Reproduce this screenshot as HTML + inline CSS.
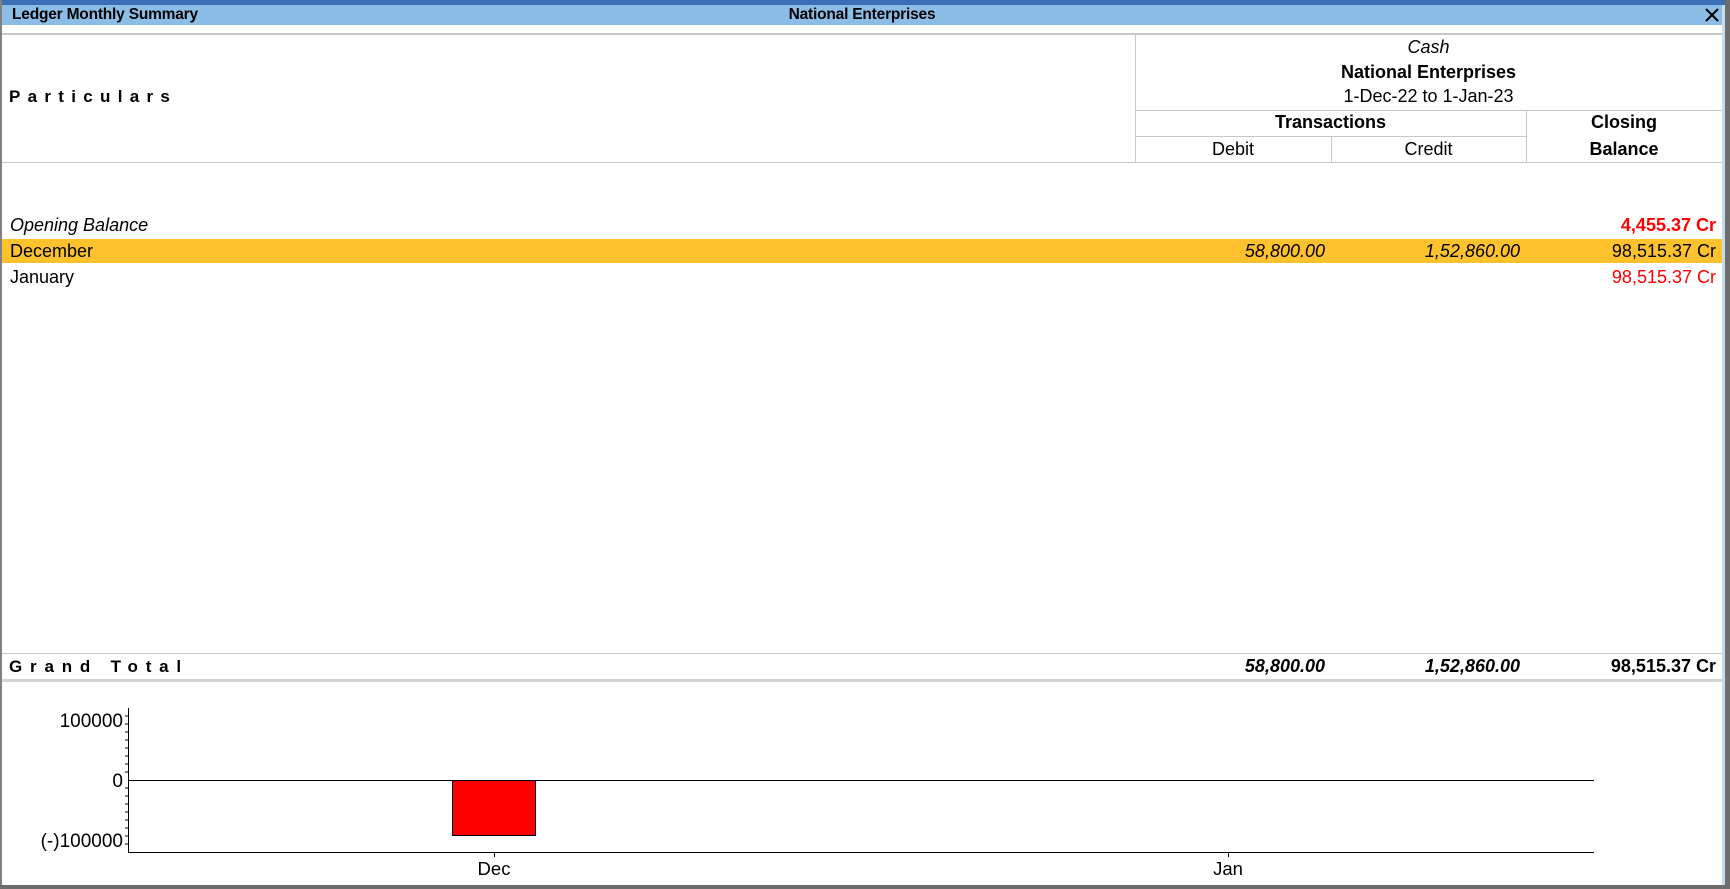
<!DOCTYPE html>
<html><head><meta charset="utf-8"><style>
*{margin:0;padding:0;box-sizing:border-box}
body{width:1730px;height:889px;position:relative;background:#fff;font-family:"Liberation Sans",Arial,sans-serif;color:#000;overflow:hidden}
.a{position:absolute;white-space:nowrap}
.r{text-align:right}
.c{text-align:center}
.hl{position:absolute;height:1px;background:#c8c8c8}
.vl{position:absolute;width:1px;background:#c8c8c8}
.f{font-size:18px;line-height:20px}
.sp{letter-spacing:7.3px;font-weight:bold;font-size:17px}
</style></head><body>
<div class="a" style="left:0;top:0;width:1730px;height:5px;background:#3a6fb5"></div>
<div class="a" style="left:0;top:5px;width:1722px;height:20px;background:#8bbde6"></div>
<div class="a" style="left:12px;top:5px;font-size:15.5px;font-weight:bold;line-height:20px;letter-spacing:-0.2px">Ledger Monthly Summary</div>
<div class="a c" style="left:742px;width:240px;top:5px;font-size:15.5px;font-weight:bold;line-height:20px;letter-spacing:-0.2px">National Enterprises</div>
<svg class="a" style="left:1704px;top:7px" width="16" height="16"><path d="M2 2L14 14M14 2L2 14" stroke="#000" stroke-width="2"/></svg>
<div class="a" style="left:0;top:0;width:2px;height:889px;background:#808080"></div>
<div class="a" style="left:1722px;top:5px;width:3px;height:884px;background:#c6dcef"></div>
<div class="a" style="left:1725px;top:0;width:5px;height:889px;background:#6d6d6d"></div>
<div class="a" style="left:0;top:885px;width:1730px;height:4px;background:#6d6d6d"></div>
<div class="hl" style="left:2px;top:33px;width:1720px;height:2px"></div>
<div class="vl" style="left:1135px;top:35px;height:128px"></div>
<div class="a sp" style="left:9px;top:87px">Particulars</div>
<div class="a c f" style="left:1135px;width:587px;top:37px;font-style:italic">Cash</div>
<div class="a c f" style="left:1135px;width:587px;top:62px;font-weight:bold">National Enterprises</div>
<div class="a c f" style="left:1135px;width:587px;top:86px">1-Dec-22 to 1-Jan-23</div>
<div class="hl" style="left:1135px;top:110px;width:587px"></div>
<div class="vl" style="left:1526px;top:110px;height:53px"></div>
<div class="a c f" style="left:1135px;width:391px;top:112px;font-weight:bold">Transactions</div>
<div class="hl" style="left:1135px;top:136px;width:391px"></div>
<div class="vl" style="left:1331px;top:136px;height:27px"></div>
<div class="a c f" style="left:1135px;width:196px;top:139px">Debit</div>
<div class="a c f" style="left:1331px;width:195px;top:139px">Credit</div>
<div class="a c f" style="left:1526px;width:196px;top:112px;font-weight:bold">Closing</div>
<div class="a c f" style="left:1526px;width:196px;top:139px;font-weight:bold">Balance</div>
<div class="hl" style="left:2px;top:162px;width:1720px"></div>
<div class="a f" style="left:10px;top:215px;font-style:italic">Opening Balance</div>
<div class="a r f" style="left:1500px;width:216px;top:215px;color:#f00;font-weight:bold">4,455.37 Cr</div>
<div class="a" style="left:2px;top:239px;width:1720px;height:24px;background:#fec22f"></div>
<div class="a f" style="left:10px;top:241px">December</div>
<div class="a r f" style="left:1150px;width:175px;top:241px;font-style:italic">58,800.00</div>
<div class="a r f" style="left:1340px;width:180px;top:241px;font-style:italic">1,52,860.00</div>
<div class="a r f" style="left:1500px;width:216px;top:241px">98,515.37 Cr</div>
<div class="a f" style="left:10px;top:267px">January</div>
<div class="a r f" style="left:1500px;width:216px;top:267px;color:#f00">98,515.37 Cr</div>
<div class="hl" style="left:2px;top:653px;width:1720px"></div>
<div class="a sp" style="left:9px;top:657px;letter-spacing:7.8px">Grand Total</div>
<div class="a r f" style="left:1150px;width:175px;top:656px;font-style:italic;font-weight:bold">58,800.00</div>
<div class="a r f" style="left:1340px;width:180px;top:656px;font-style:italic;font-weight:bold">1,52,860.00</div>
<div class="a r f" style="left:1500px;width:216px;top:656px;font-weight:bold">98,515.37 Cr</div>
<div class="hl" style="left:2px;top:679px;width:1720px;height:3px;background:#d4d4d4"></div>
<svg class="a" style="left:0;top:0" width="1730" height="889">
<line x1="128.5" y1="708" x2="128.5" y2="853" stroke="#000"/>
<line x1="128" y1="852.5" x2="1594" y2="852.5" stroke="#000"/>
<line x1="128" y1="780.5" x2="1594" y2="780.5" stroke="#000"/>
<g stroke="#000">
<line x1="125" y1="716" x2="128" y2="716"/><line x1="125" y1="724" x2="128" y2="724"/><line x1="125" y1="732" x2="128" y2="732"/><line x1="125" y1="740" x2="128" y2="740"/><line x1="125" y1="748" x2="128" y2="748"/><line x1="125" y1="756" x2="128" y2="756"/><line x1="125" y1="764" x2="128" y2="764"/><line x1="125" y1="772" x2="128" y2="772"/>
<line x1="125" y1="788" x2="128" y2="788"/><line x1="125" y1="796" x2="128" y2="796"/><line x1="125" y1="804" x2="128" y2="804"/><line x1="125" y1="812" x2="128" y2="812"/><line x1="125" y1="820" x2="128" y2="820"/><line x1="125" y1="828" x2="128" y2="828"/><line x1="125" y1="836" x2="128" y2="836"/><line x1="125" y1="844" x2="128" y2="844"/>
<line x1="494.5" y1="853" x2="494.5" y2="857"/><line x1="1228.5" y1="853" x2="1228.5" y2="857"/>
</g>
<rect x="452.5" y="780.5" width="83" height="55" fill="#f00" stroke="#000"/>
<g font-family="Liberation Sans, Arial, sans-serif" font-size="19" text-anchor="end">
<text x="123" y="727">100000</text>
<text x="123" y="787">0</text>
<text x="123" y="847">(-)100000</text>
</g>
<g font-family="Liberation Sans, Arial, sans-serif" font-size="18.5" text-anchor="middle">
<text x="494" y="875">Dec</text>
<text x="1228" y="875">Jan</text>
</g>
</svg>
</body></html>
